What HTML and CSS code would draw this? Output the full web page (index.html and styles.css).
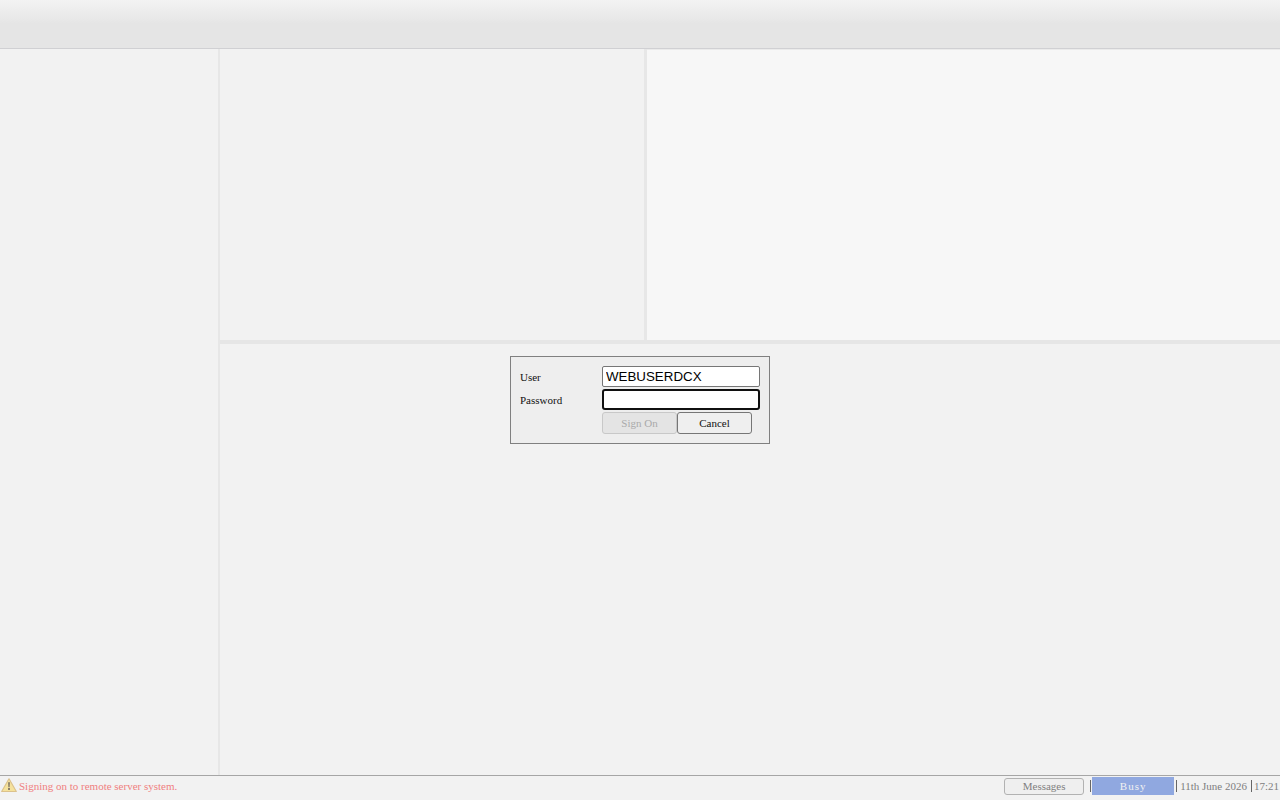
FILE: index.html
```html
<!DOCTYPE html>
<html lang="en">
<head>
  <meta charset="utf-8">
  <title>Sign On</title>
  <link rel="stylesheet" href="styles.css">
</head>
<body>

  <header class="toolbar"></header>

  <main class="workspace">
    <nav class="sidebar"></nav>
    <div class="content">
      <div class="top-panes">
        <section class="list-pane"></section>
        <section class="detail-pane"></section>
      </div>
      <section class="bottom-pane"></section>
    </div>
  </main>

  <footer class="statusbar">
    <div class="status-message">
      <svg class="warning-icon" width="16" height="16" viewBox="0 0 16 16" aria-hidden="true">
        <path d="M8 .8 L15.3 13.5 H0.7 Z" fill="#f5e29c" stroke="#dcc28c" stroke-width="1.2" stroke-linejoin="round"/>
        <path d="M7 4.3 H9 L8.7 9.2 H7.3 Z" fill="#8c8068"/>
        <rect x="7" y="10" width="2" height="2" fill="#8c8068"/>
      </svg>
      <span>Signing on to remote server system.</span>
    </div>
    <button type="button" class="messages">Messages</button>
    <span class="separator"></span>
    <span class="busy">Busy</span>
    <span class="separator"></span>
    <span class="date">11th June 2026</span>
    <span class="separator"></span>
    <span class="time">17:21</span>
  </footer>

  <form class="signon">
    <label for="user">User</label>
    <input type="text" id="user" value="WEBUSERDCX">
    <label for="password">Password</label>
    <input type="password" id="password" class="active">
    <div class="buttons">
      <button type="submit" disabled>Sign On</button>
      <button type="button">Cancel</button>
    </div>
  </form>

</body>
</html>
```

FILE: styles.css
```css
* {
  box-sizing: border-box;
}
body {
  margin: 0;
  height: 100vh;
  display: flex;
  flex-direction: column;
  overflow: hidden;
  background-color: #f2f2f2;
  font-family: "Liberation Serif", "Times New Roman", serif;
  font-size: 11px;
  color: #111;
}
button {
  font-family: inherit;
  font-size: 11px;
  padding: 0;
  border: 1px solid #767676;
  border-radius: 3px;
  background-color: #efefef;
  color: #111;
}
.toolbar {
  height: 49px;
  background: linear-gradient(#f3f3f3, #e5e5e5 50%);
  border-bottom: 1px solid #d0d0d3;
}

/* panes */
.workspace {
  flex: 1;
  display: flex;
}
.sidebar {
  width: 220px;
  border-right: 2px solid #e7e7e7;
}
.content {
  flex: 1;
  display: flex;
  flex-direction: column;
}
.top-panes {
  flex: 0 0 calc(40% + 5px);
  display: flex;
  border-bottom: 4px solid #e6e6e6;
}
.list-pane {
  flex: 0 0 calc(40% + 3px);
  border-right: 3px solid #e7e7e7;
}
.detail-pane {
  flex: 1;
  background-color: #f7f7f7;
  border-top: 1px solid #ebebeb;
}
.bottom-pane {
  flex: 1;
}

/* status bar */
.statusbar {
  height: 25px;
  display: flex;
  align-items: center;
  padding: 0 1px 4px;
  border-top: 1px solid #a6a6a6;
  color: #808080;
}
.status-message {
  flex: 1;
  display: flex;
  align-items: center;
  gap: 2px;
  color: #f08080;
}
.messages {
  width: 80px;
  height: 17px;
  margin-right: 6px;
  border-color: #b2b2b2;
  color: #808080;
}
.separator {
  width: 1px;
  height: 12px;
  background-color: #666;
}
.busy {
  width: 82px;
  height: 18px;
  margin: 0 2px 0 1px;
  line-height: 18px;
  text-align: center;
  letter-spacing: 1px;
  background-color: #90a8e0;
  color: #f1f1f1;
}
.date {
  margin: 0 4px 0 3px;
}
.time {
  margin-left: 2px;
}

/* sign on box, centred over the panes */
.signon {
  position: absolute;
  top: 50%;
  left: 50%;
  transform: translate(-50%, -50%);
  width: 260px;
  display: grid;
  grid-template-columns: 80px 1fr;
  gap: 2px;
  align-items: center;
  padding: 9px;
  border: 1px solid #808080;
  background-color: #eee;
}
.signon input {
  width: 100%;
  height: 21px;
  padding: 0 3px;
  border: 1px solid #767676;
  border-radius: 2px;
  background-color: #fff;
  font-family: "Liberation Sans", Arial, sans-serif;
  outline: none;
}
.signon input.active {
  border: 2px solid #101010;
  border-radius: 3px;
}
.buttons {
  grid-column: 2;
  display: flex;
}
.buttons button {
  width: 75px;
  height: 22px;
}
.buttons button:disabled {
  background-color: #e4e4e4;
  border-color: #c8c8c8;
  color: #aaa;
}
```
